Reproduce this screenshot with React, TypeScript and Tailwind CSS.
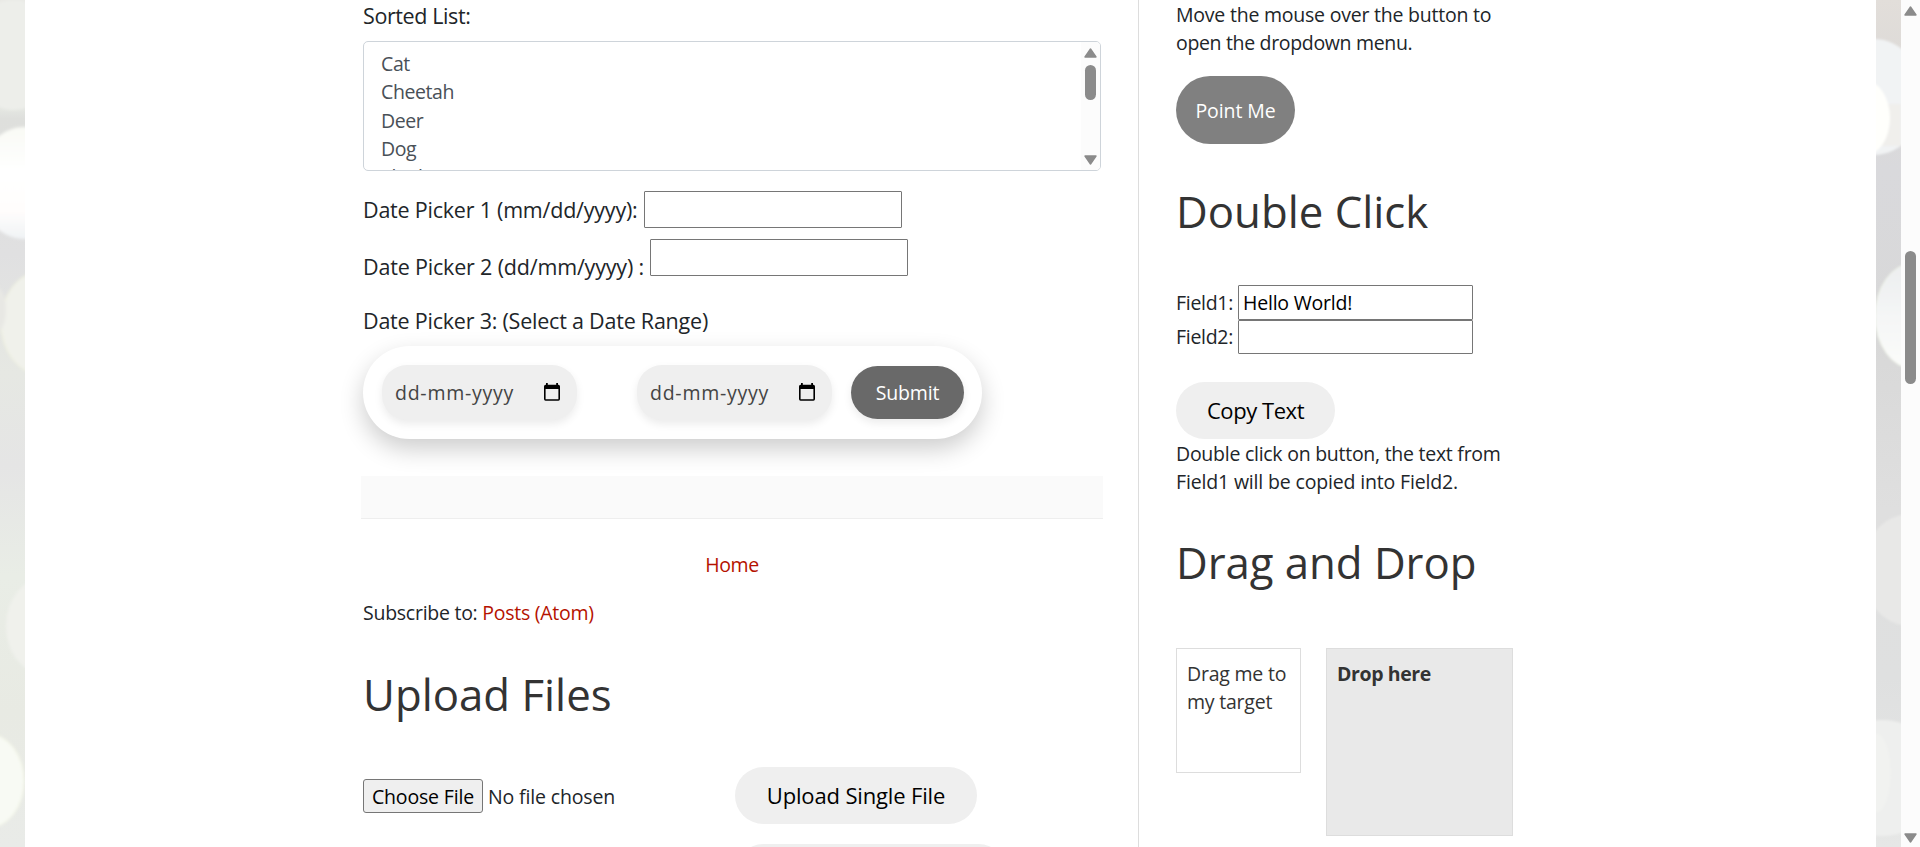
const animals = ["Cat", "Cheetah", "Deer", "Dog", "Elephant"];

function Arrow({ down = false }: { down?: boolean }) {
  return (
    <svg viewBox="0 0 13 10" className={down ? "h-[10px] w-[13px] shrink-0 rotate-180" : "h-[10px] w-[13px] shrink-0"}>
      <path d="M6.5 1 L12 9 H1 Z" fill="#8b8b8b" stroke="#8b8b8b" strokeWidth="1.4" strokeLinejoin="round" />
    </svg>
  );
}

function CalendarIcon() {
  return (
    <svg viewBox="0 0 16 18" className="mb-[2px] h-[18px] w-[16px] shrink-0" fill="none">
      <path d="M0 3.4 Q0 1.8 1.6 1.8 H2 V0 H3.8 V1.8 H12.2 V0 H14 V1.8 H14.4 Q16 1.8 16 3.4 V16 Q16 17.8 14.4 17.8 H1.6 Q0 17.8 0 16 Z M1.6 6 V16.2 H14.4 V6 Z" fill="#000" fillRule="evenodd" />
    </svg>
  );
}

function DateField() {
  return (
    <div className="flex h-[55px] w-[195px] items-center justify-between rounded-[25px] bg-[#efefef] pr-[17px] pl-[13px] shadow-[0_4px_8px_rgba(0,0,0,0.08)]">
      <span className="text-[19.5px] tracking-[0.75px] whitespace-nowrap text-[#444]">dd-mm-yyyy</span>
      <CalendarIcon />
    </div>
  );
}

function LeftBokeh() {
  return (
    <svg viewBox="0 0 25 847" preserveAspectRatio="none" className="h-full w-[25px] shrink-0">
      <defs>
        <linearGradient id="lb" x1="0" y1="0" x2="0" y2="1">
          <stop offset="0" stopColor="#e9e9e5" />
          <stop offset="0.12" stopColor="#e9ece6" />
          <stop offset="0.14" stopColor="#dedfdc" />
          <stop offset="0.3" stopColor="#e0e0e1" />
          <stop offset="0.44" stopColor="#e6e8e3" />
          <stop offset="0.55" stopColor="#e5e5e5" />
          <stop offset="0.68" stopColor="#e9ede6" />
          <stop offset="0.84" stopColor="#e8eae3" />
          <stop offset="1" stopColor="#e9ebe8" />
        </linearGradient>
        <linearGradient id="lw" x1="0" y1="0" x2="0" y2="1">
          <stop offset="0" stopColor="#f9faf5" />
          <stop offset="0.4" stopColor="#ffffff" />
          <stop offset="0.75" stopColor="#fffdfc" />
          <stop offset="1" stopColor="#f0f3f5" />
        </linearGradient>
        <filter id="ls" x="-20%" y="-20%" width="140%" height="140%"><feGaussianBlur stdDeviation="1.4" /></filter>
      </defs>
      <rect width="25" height="847" fill="url(#lb)" />
      <g filter="url(#ls)">
        <ellipse cx="14" cy="55" rx="46" ry="55" fill="#edeeea" />
        <ellipse cx="24" cy="183" rx="46" ry="56" fill="url(#lw)" />
        <ellipse cx="42" cy="323" rx="41" ry="52" fill="#f0f1eb" stroke="#f0f2dc" />
        <ellipse cx="-8" cy="310" rx="14" ry="26" fill="#e8e8e4" />
        <ellipse cx="48" cy="626" rx="42" ry="50" fill="#f0f1ec" />
        <ellipse cx="-12" cy="781" rx="36" ry="47" fill="#f8faf4" stroke="#f4f7e4" />
      </g>
    </svg>
  );
}

function RightBokeh() {
  return (
    <svg viewBox="0 0 25 847" preserveAspectRatio="none" className="h-full w-[25px] shrink-0">
      <defs>
        <linearGradient id="rb" x1="0" y1="0" x2="0" y2="1">
          <stop offset="0" stopColor="#e2deda" />
          <stop offset="0.06" stopColor="#dedbd8" />
          <stop offset="0.2" stopColor="#d9d9dc" />
          <stop offset="0.4" stopColor="#d8d8d8" />
          <stop offset="0.6" stopColor="#dfdfdf" />
          <stop offset="0.8" stopColor="#dfe0e0" />
          <stop offset="1" stopColor="#e6e7e6" />
        </linearGradient>
        <linearGradient id="rw" x1="0" y1="0" x2="0" y2="1">
          <stop offset="0" stopColor="#eceeef" />
          <stop offset="0.6" stopColor="#f6f7f7" />
          <stop offset="1" stopColor="#fbfcfa" />
        </linearGradient>
        <filter id="rs" x="-20%" y="-20%" width="140%" height="140%"><feGaussianBlur stdDeviation="1.1" /></filter>
      </defs>
      <rect width="25" height="847" fill="url(#rb)" />
      <g filter="url(#rs)">
        <ellipse cx="-2" cy="97" rx="50" ry="58" fill="#f1f3f4" />
        <rect x="0" y="104" width="25" height="42" fill="#f0efec" />
        <ellipse cx="-12" cy="118" rx="26" ry="38" fill="#fffffc" />
        <ellipse cx="38" cy="316" rx="39" ry="53" fill="url(#rw)" stroke="#eef3e6" />
        <ellipse cx="34" cy="570" rx="48" ry="56" fill="#e8e8e7" />
        <ellipse cx="6" cy="778" rx="60" ry="58" fill="#eeefee" />
        <ellipse cx="0" cy="773" rx="15" ry="40" fill="#f1f2f0" />
      </g>
    </svg>
  );
}

function Field({ label, value = "", size }: { label: string; value?: string; size: string }) {
  return (
    <label className={`flex items-center ${size}`}>
      <span className="w-[62px] tracking-[-0.3px]">{label}</span>
      <input
        defaultValue={value}
        className="h-full w-[235px] rounded-[1px] border border-[#767676] bg-white px-1 text-[19.5px] tracking-[-0.2px] text-black outline-none"
      />
    </label>
  );
}

function MainColumn() {
  return (
    <main className="flex w-[738px] shrink-0 flex-col text-[21.5px] tracking-[-0.22px] text-[#212529] [&>*]:shrink-0">
      <div className="pt-px leading-[30px] tracking-[-0.4px]">Sorted List:</div>

      <div className="mt-[10px] flex h-[130px] overflow-hidden rounded-[5px] border border-[#ced4da] bg-white">
        <div className="flex-1 pt-[8px] pl-[17px] text-[19.5px] leading-[28.3px] tracking-[-0.4px] text-[#495057]">
          {animals.map((name) => (
            <div key={name}>{name}</div>
          ))}
        </div>
        <div className="flex w-[19px] flex-col items-center justify-between bg-[#fcfcfc] pt-[6px] pb-[5px]">
          <div className="flex flex-col items-center gap-[7px]">
            <Arrow />
            <div className="h-[35px] w-[11px] rounded-full bg-[#8b8b8b]" />
          </div>
          <Arrow down />
        </div>
      </div>

      <label className="mt-5 flex h-[37px] leading-[37px]">
        <span className="w-[281px] whitespace-nowrap">Date Picker 1 (mm/dd/yyyy):</span>
        <input className="h-[37px] w-[258px] rounded-[1px] border border-[#767676] bg-white outline-none" />
      </label>
      <label className="mt-[11px] flex h-[37px] leading-[37px]">
        <span className="mt-[9px] w-[287px] tracking-[-0.18px] whitespace-nowrap">Date Picker 2 (dd/mm/yyyy) :</span>
        <input className="h-[37px] w-[258px] rounded-[1px] border border-[#767676] bg-white outline-none" />
      </label>
      <div className="mt-[30px] leading-[30px]">Date Picker 3: (Select a Date Range)</div>

      <div className="mt-[10px] flex h-[93px] w-[619px] items-center rounded-full bg-white pl-[19px] shadow-[0_10px_25px_rgba(0,0,0,0.2)]">
        <DateField />
        <div className="w-[60px]" />
        <DateField />
        <button className="ml-[19px] h-[53px] w-[113px] rounded-full bg-[#696969] text-[19.5px] font-medium tracking-[-0.2px] text-white shadow-[0_4px_8px_rgba(0,0,0,0.08)]">
          Submit
        </button>
      </div>

      <div className="mt-[37px] -ml-[2px] h-[43px] w-[742px] border-b border-[#eee] bg-[#fafafa]" />

      <div className="mt-[31px] text-center text-[19.5px] leading-[30px] tracking-[-0.4px] text-[#b51200]">Home</div>
      <div className="mt-[18px] text-[19.5px] leading-[30px] tracking-[-0.26px]">
        Subscribe to: <span className="text-[#b51200]">Posts (Atom)</span>
      </div>

      <h2 className="mt-[36px] text-[43.75px] leading-[60px] font-normal tracking-[0px] text-[#333]">Upload Files</h2>

      <div className="mt-[43px] flex h-[57px] items-center">
        <div className="flex w-[372px] items-center text-[19.5px] tracking-[-0.15px]">
          <button className="h-[34px] w-[120px] rounded-[3px] border border-[#767676] bg-[#efefef] pt-[2px] text-black">Choose File</button>
          <span className="ml-[5px] pt-[2px]">No file chosen</span>
        </div>
        <button className="h-[57px] w-[242px] rounded-full bg-[#efefef] text-[22px] tracking-[-0.15px] text-black">
          Upload Single File
        </button>
      </div>
      <div className="mt-[20px] flex h-[57px] pl-[372px]">
        <button className="h-[57px] w-[272px] shrink-0 rounded-full bg-[#efefef]" aria-label="Upload Multiple Files" />
      </div>
    </main>
  );
}

function SideColumn() {
  return (
    <aside className="ml-[37px] flex shrink-0 flex-col border-l border-[#dddddd] pl-[37px] text-[19.5px] tracking-[-0.22px] text-[#212529] [&>*]:shrink-0">
      <p className="pt-px leading-[28px]">
        Move the mouse over the button to
        <br />
        <span className="tracking-[-0.33px]">open the dropdown menu.</span>
      </p>
      <button className="mt-[19px] h-[68px] w-[119px] rounded-full bg-[#808080] pt-[2px] tracking-[-0.1px] text-white">Point Me</button>

      <h2 className="mt-[37px] text-[43.75px] leading-[60px] font-normal tracking-[0px] text-[#333]">Double Click</h2>
      <div className="mt-[44px] flex flex-col">
        <Field label="Field1:" value="Hello World!" size="h-[35px]" />
        <Field label="Field2:" size="h-[34px]" />
      </div>
      <button className="mt-[28px] h-[57px] w-[159px] rounded-full bg-[#efefef] text-[22px] tracking-[-0.45px] text-black">
        Copy Text
      </button>
      <p className="pt-px leading-[28px]">
        <span className="tracking-[-0.26px]">Double click on button, the text from</span>
        <br />
        <span className="tracking-[-0.16px]">Field1 will be copied into Field2.</span>
      </p>

      <h2 className="mt-[36px] text-[43.75px] leading-[60px] font-normal tracking-[-0.05px] text-[#333]">Drag and Drop</h2>
      <div className="mt-[56px] flex items-start gap-[25px] leading-[28px] text-[#333]">
        <div className="h-[125px] w-[125px] border border-[#dddddd] bg-white pt-[11px] pl-[10px] whitespace-nowrap">
          Drag me to
          <br />
          my target
        </div>
        <div className="h-[188px] w-[187px] border border-[#dddddd] bg-[#e9e9e9] pt-[11px] pl-[10px] font-bold tracking-[-0.4px]">
          Drop here
        </div>
      </div>
    </aside>
  );
}

export default function App() {
  return (
    <div className="flex h-[847px] w-[1920px] overflow-hidden bg-white font-['Open_Sans','Noto_Sans',sans-serif]">
      <LeftBokeh />
      <div className="flex h-full w-[1851px] shrink-0 overflow-hidden bg-white pl-[338px]">
        <MainColumn />
        <SideColumn />
      </div>
      <RightBokeh />
      <div className="flex h-full w-[19px] shrink-0 flex-col items-center bg-[#fcfcfc] pt-[6px] pb-[4px]">
        <Arrow />
        <div className="mt-[235px] h-[133px] w-[11px] shrink-0 rounded-full bg-[#8b8b8b]" />
        <div className="flex-1" />
        <Arrow down />
      </div>
    </div>
  );
}
